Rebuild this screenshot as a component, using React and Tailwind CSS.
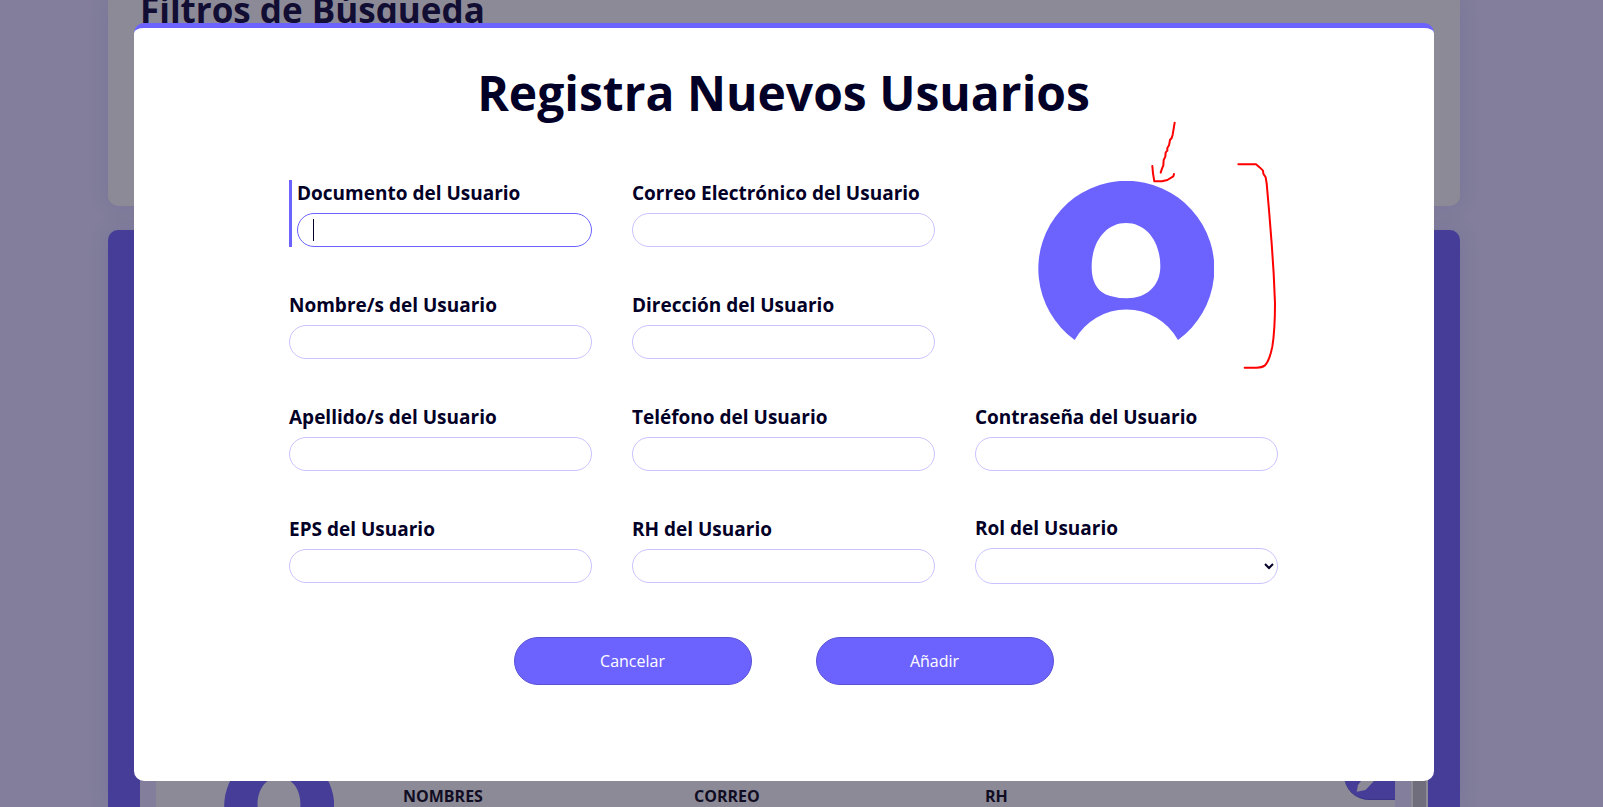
import React from "react";

function Avatar({ className }) {
  return (
    <svg viewBox="0 0 528 528" className={className} fill="currentColor" aria-hidden="true">
      <path
        fillRule="evenodd"
        d="M110 477A264 264 0 1 1 420 477A177 177 0 0 0 110 477ZM264 126C204 126 161 182 161 258C161 312 186 336 214 344Q240 352 268 352C322 352 367 318 367 256C367 180 324 126 264 126Z"
      />
    </svg>
  );
}

function Field({ id, label, type = "text" }) {
  return (
    <div className="flex flex-col justify-center">
      <label htmlFor={id} className="mb-1.5 text-[19px] leading-[27px] font-bold">
        {label}
      </label>
      <input
        id={id}
        type={type}
        className="h-[34px] w-full rounded-full border border-[#c9c4ff] bg-white px-4 outline-none focus:border-[#6c63ff]"
      />
    </div>
  );
}

function ActiveField({ id, label }) {
  return (
    <div className="flex flex-col justify-center border-l-[3px] border-[#6c63ff] pl-[5px]">
      <label htmlFor={id} className="mb-1.5 text-[19px] leading-[27px] font-bold">
        {label}
      </label>
      <div className="relative">
        <input
          id={id}
          type="text"
          className="block h-[34px] w-full rounded-full border border-[#6c63ff] bg-white px-4 caret-transparent outline-none"
        />
        <span className="absolute top-1.5 left-4 h-[22px] w-px bg-[#030027]" />
      </div>
    </div>
  );
}

function Annotations() {
  return (
    <svg
      viewBox="0 0 960 870"
      className="pointer-events-none absolute -top-20 left-[25px] h-[290px] w-80"
      fill="none"
      stroke="#ff0000"
      strokeWidth="6"
      strokeLinecap="round"
      strokeLinejoin="round"
      aria-hidden="true"
    >
      <path d="M524 68L518 104L515 114L510 120L507 136L502 144L502 152L497 157L496 170L491 180L490 196L486 206L482 218" />
      <path d="M457 198L459 220L463 244L486 244L502 240L520 229L522 222" />
      <path d="M715 193L768 193L780 203L789 212L790 221L797 232L800 250L807 330L815 430L821 520L825 610Q825 690 817 740Q808 784 794 797Q786 803 770 803L734 803" />
    </svg>
  );
}

function Backdrop() {
  return (
    <div className="mx-auto flex h-full max-w-[1352px] flex-col gap-6">
      <section className="h-[206px] shrink-0 rounded-b-[10px] bg-[#8c8a97] px-8 shadow-[0_0_20px_rgba(69,61,152,0.15)]">
        <h2 className="-mt-[14px] text-[35px] leading-[48px] font-bold text-[#110d33]">Filtros de Búsqueda</h2>
      </section>
      <section className="flex min-h-0 flex-1 flex-col overflow-hidden rounded-t-[10px] bg-[#453d98] px-8 pt-8 shadow-[0_0_20px_rgba(69,61,152,0.15)]">
        <div className="flex min-h-0 flex-1 bg-[#827e9b] pl-4">
          <article className="flex min-w-0 flex-1 items-end overflow-hidden bg-[#8c8a97]">
            <div className="-mb-[54px] flex w-[247px] shrink-0 justify-center pr-0.5">
              <Avatar className="size-[110px] text-[#453d98]" />
            </div>
            <div className="grid w-[873px] grid-cols-3 text-base leading-[22px] font-bold text-[#110d22]">
              <span>NOMBRES</span>
              <span>CORREO</span>
              <span>RH</span>
            </div>
            <button
              type="button"
              aria-label="Editar"
              className="mb-[7px] ml-auto h-[50px] w-[51px] shrink-0 overflow-hidden rounded-l-full border-b border-[#3b3485] bg-[#453d98] text-[#8c8a97]"
            >
              <svg viewBox="0 0 51 50" className="h-[50px] w-[51px]" fill="currentColor" aria-hidden="true">
                <path d="M12.7 41.7L14 35L17 31L34 14L44 20L30 31L21.5 40Z" />
              </svg>
            </button>
          </article>
          <div className="w-4 shrink-0" />
          <div className="w-[17px] shrink-0 border-x-2 border-[#8e8d96] bg-[#706e7c]" />
        </div>
      </section>
    </div>
  );
}

export default function App() {
  return (
    <main className="relative h-screen overflow-hidden bg-[#827e9b] pr-[35px] font-['Open_Sans',sans-serif] text-[#030027]">
      <Backdrop />
      <div className="absolute inset-0 flex items-start justify-center pt-[23px] pr-[35px]">
        <form
          role="dialog"
          aria-labelledby="dialog-title"
          className="w-full max-w-[1300px] rounded-[10px] border-t-[5px] border-[#6c63ff] bg-white pt-8 pr-[156px] pb-24 pl-[155px]"
        >
          <h1 id="dialog-title" className="text-center text-5xl leading-[65px] font-bold">
            Registra Nuevos Usuarios
          </h1>
          <div className="mt-[55px] grid grid-cols-3 gap-x-10 gap-y-[45px]">
            <ActiveField id="documento" label="Documento del Usuario" />
            <Field id="correo" label="Correo Electrónico del Usuario" type="email" />
            <div className="relative row-span-2 flex justify-center pt-px pr-0.5">
              <Avatar className="size-44 text-[#6c63ff]" />
              <Annotations />
            </div>
            <Field id="nombres" label="Nombre/s del Usuario" />
            <Field id="direccion" label="Dirección del Usuario" />
            <Field id="apellidos" label="Apellido/s del Usuario" />
            <Field id="telefono" label="Teléfono del Usuario" type="tel" />
            <Field id="contrasena" label="Contraseña del Usuario" type="password" />
            <Field id="eps" label="EPS del Usuario" />
            <Field id="rh" label="RH del Usuario" />
            <div className="-my-px flex flex-col justify-center">
              <label htmlFor="rol" className="mb-1.5 text-[19px] leading-[27px] font-bold">
                Rol del Usuario
              </label>
              <select
                id="rol"
                defaultValue=""
                className="h-9 w-full rounded-full border border-[#c9c4ff] bg-white px-1 outline-none"
              >
                <option value=""></option>
              </select>
            </div>
          </div>
          <div className="mt-[54px] flex justify-center gap-16">
            <button type="button" className="h-12 w-[238px] rounded-full border border-[#5a52d5] bg-[#6c63ff] text-base text-white">
              Cancelar
            </button>
            <button type="submit" className="h-12 w-[238px] rounded-full border border-[#5a52d5] bg-[#6c63ff] text-base text-white">
              Añadir
            </button>
          </div>
        </form>
      </div>
    </main>
  );
}
